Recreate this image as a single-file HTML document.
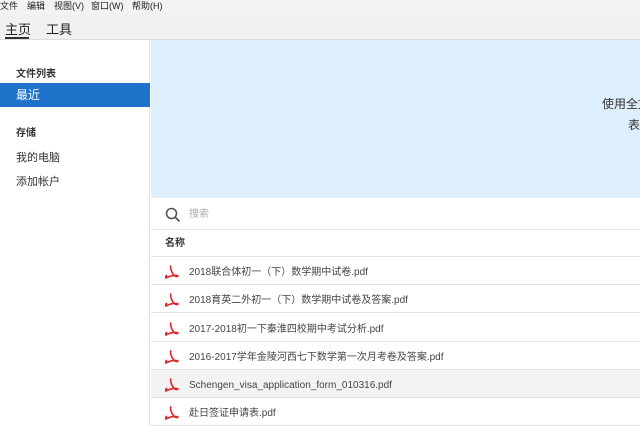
<!DOCTYPE html><html><head><meta charset="utf-8"><style>
*{margin:0;padding:0;box-sizing:border-box}
body{width:640px;height:426px;overflow:hidden;background:#fff;font-family:"Liberation Sans","Noto Sans CJK SC",sans-serif;position:relative}
.menu{position:absolute;top:0;left:0;width:640px;height:14px;background:#f3f3f3;font-size:9px;color:#222;line-height:13px}
.menu span{position:absolute;top:0}
.tabs{position:absolute;top:14px;left:0;width:640px;height:26px;background:#f1f1f1;border-bottom:1px solid #ddd}
.tab{position:absolute;top:5px;font-size:13px;color:#222}
.side{position:absolute;top:40px;left:0;width:150px;height:386px;background:#fff;border-right:1px solid #e3e3e3}
.side div{position:absolute;left:16px;font-size:11px;color:#333}
.sel{position:absolute;left:0!important;top:43px;width:150px;height:24px;background:#1f72c9;color:#fff!important;padding-left:16px;line-height:24px;font-size:12px!important}
.banner{position:absolute;left:151px;top:40px;width:489px;height:158px;background:#ddeefc;overflow:hidden}
.bt{position:absolute;font-size:12px;color:#333;white-space:nowrap}
.row{position:absolute;left:151px;width:489px;border-bottom:1px solid #e2e2e2;font-size:10px;color:#444;overflow:hidden}
.f{height:28px;line-height:31px;padding-left:38px}
.f svg{position:absolute;left:14px;top:8px}
</style></head><body>
<div class="menu"><span style="left:0">文件</span><span style="left:27px">编辑</span><span style="left:54px">视图(V)</span><span style="left:91px">窗口(W)</span><span style="left:132px">帮助(H)</span></div>
<div class="tabs"><div class="tab" style="left:5px">主页</div><div style="position:absolute;left:5px;top:23px;width:24px;height:2px;background:#333"></div><div class="tab" style="left:46px">工具</div></div>
<div class="side">
<div style="top:25px;font-weight:bold;font-size:10px">文件列表</div>
<div class="sel">最近</div>
<div style="top:84px;font-weight:bold;font-size:10px">存储</div>
<div style="top:109px">我的电脑</div>
<div style="top:133px">添加帐户</div>
</div>
<div class="banner"><div class="bt" style="left:451px;top:55px">使用全文</div><div class="bt" style="left:477px;top:76px">表</div></div>
<div class="row" style="top:198px;height:32px;line-height:34px">
<svg width="16" height="16" style="position:absolute;left:14px;top:9px" viewBox="0 0 16 16"><circle cx="6.5" cy="6.5" r="5" fill="none" stroke="#555" stroke-width="1.6"/><path d="M10 10L14.5 14.5" stroke="#555" stroke-width="1.8"/></svg>
<span style="position:absolute;left:38px;color:#aaa">搜索</span></div>
<div class="row" style="top:230px;height:27px;line-height:28px;padding-left:14px;font-weight:bold;color:#333">名称</div>
<div class="row f" style="top:257px"><svg width="14" height="14" viewBox="0 0 14 14"><path d="M6 0.5C5 2 6 6 8 9C10 12 13 12 13 11C12 10 6 10 1 13C0 13 0 12 2 10" fill="none" stroke="#d9262b" stroke-width="1.6"/></svg>2018联合体初一（下）数学期中试卷.pdf</div>
<div class="row f" style="top:285px"><svg width="14" height="14" viewBox="0 0 14 14"><path d="M6 0.5C5 2 6 6 8 9C10 12 13 12 13 11C12 10 6 10 1 13C0 13 0 12 2 10" fill="none" stroke="#d9262b" stroke-width="1.6"/></svg>2018育英二外初一（下）数学期中试卷及答案.pdf</div>
<div class="row f" style="top:314px"><svg width="14" height="14" viewBox="0 0 14 14"><path d="M6 0.5C5 2 6 6 8 9C10 12 13 12 13 11C12 10 6 10 1 13C0 13 0 12 2 10" fill="none" stroke="#d9262b" stroke-width="1.6"/></svg>2017-2018初一下秦淮四校期中考试分析.pdf</div>
<div class="row f" style="top:342px"><svg width="14" height="14" viewBox="0 0 14 14"><path d="M6 0.5C5 2 6 6 8 9C10 12 13 12 13 11C12 10 6 10 1 13C0 13 0 12 2 10" fill="none" stroke="#d9262b" stroke-width="1.6"/></svg>2016-2017学年金陵河西七下数学第一次月考卷及答案.pdf</div>
<div class="row f" style="top:370px;background:#f3f3f3"><svg width="14" height="14" viewBox="0 0 14 14"><path d="M6 0.5C5 2 6 6 8 9C10 12 13 12 13 11C12 10 6 10 1 13C0 13 0 12 2 10" fill="none" stroke="#d9262b" stroke-width="1.6"/></svg>Schengen_visa_application_form_010316.pdf</div>
<div class="row f" style="top:398px"><svg width="14" height="14" viewBox="0 0 14 14"><path d="M6 0.5C5 2 6 6 8 9C10 12 13 12 13 11C12 10 6 10 1 13C0 13 0 12 2 10" fill="none" stroke="#d9262b" stroke-width="1.6"/></svg>赴日签证申请表.pdf</div>
</body></html>
